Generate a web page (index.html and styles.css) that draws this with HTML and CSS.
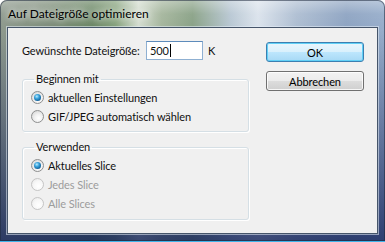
FILE: index.html
```html
<!DOCTYPE html>
<html lang="de">
<head>
  <meta charset="UTF-8" />
  <title>Auf Dateigröße optimieren</title>
  <link rel="stylesheet" href="styles.css">
</head>
<body>
  <div class="window">
    <div class="titlebar">Auf Dateigröße optimieren</div>
    <div class="client">
      <div class="main">
        <div class="size-row">
          <span class="size-label">Gewünschte Dateigröße:</span>
          <div class="textbox">500<span class="caret"></span></div>
          <span class="unit">K</span>
        </div>

        <fieldset class="group">
          <legend>Beginnen mit</legend>
          <div class="option"><span class="radio checked"></span>aktuellen Einstellungen</div>
          <div class="option"><span class="radio"></span>GIF/JPEG automatisch wählen</div>
        </fieldset>

        <fieldset class="group group-last">
          <legend>Verwenden</legend>
          <div class="option"><span class="radio checked"></span>Aktuelles Slice</div>
          <div class="option disabled"><span class="radio"></span>Jedes Slice</div>
          <div class="option disabled"><span class="radio"></span>Alle Slices</div>
        </fieldset>
      </div>

      <div class="actions">
        <button class="btn btn-default">OK</button>
        <button class="btn">Abbrechen</button>
      </div>
    </div>
  </div>
</body>
</html>
```

FILE: styles.css
```css
* {
  margin: 0;
  padding: 0;
  box-sizing: border-box;
}
body {
  font-family: Lato, 'Liberation Sans', sans-serif;
  font-size: 11px;
  letter-spacing: -0.1px;
  color: #111;
  background: #fff;
}
.window {
  width: 385px;
  height: 242px;
  display: flex;
  flex-direction: column;
  padding: 0 7px 7px 7px;
  border-radius: 7px 7px 0 0;
  border-bottom: 1px solid #3fb4ea;
  background:
    linear-gradient(180deg, rgba(255,255,255,0.35) 0, rgba(255,255,255,0.05) 14px, rgba(255,255,255,0) 27px),
    linear-gradient(180deg, rgba(0,0,0,0) 0, rgba(0,0,0,0) 30px, rgba(20,35,90,0.8) 100%),
    linear-gradient(90deg, #8f9a8e 0%, #7f8e7b 12%, #6b8765 24%, #86a27c 30%, #d4ddd0 36%, #a5b69d 42%, #8aa287 50%, #b9c8d4 60%, #dbe3ec 67%, #aebed2 77%, #8ea4c2 90%, #98aecb 100%);
  box-shadow: inset 0 0 0 1px rgba(30,40,60,0.55);
}
.titlebar {
  height: 27px;
  padding: 1px 0 0 1px;
  font-size: 12px;
  letter-spacing: 0;
  line-height: 26px;
  color: #000;
  text-shadow: 0 0 6px rgba(255,255,255,0.9), 0 0 10px rgba(255,255,255,0.7);
}
.client {
  flex: 1;
  display: flex;
  padding: 13px 13px 0 14px;
  background: #f0f0f0;
  border: 1px solid #46556a;
  box-shadow: 0 0 0 1px rgba(230,238,248,0.55);
}
.main {
  width: 227px;
  display: flex;
  flex-direction: column;
}
.size-row {
  display: flex;
  align-items: center;
  height: 19px;
  white-space: nowrap;
}
.size-label {
  width: 124px;
}
.textbox {
  width: 57px;
  height: 19px;
  padding-left: 3px;
  line-height: 17px;
  background: #fff;
  border: 1px solid #8fb0d2;
  border-top-color: #5d8bbb;
  display: flex;
  align-items: center;
}
.caret {
  display: inline-block;
  width: 1px;
  height: 13px;
  margin-left: 1px;
  background: #000;
}
.unit {
  margin-left: 5px;
}
.group {
  margin-top: 11px;
  padding: 1px 0 5px 8px;
  border: 1px solid #d5dfe5;
  border-radius: 3px;
  box-shadow: inset 1px 1px 0 #fff, 1px 1px 0 #fff;
}
.group + .group {
  margin-top: 7px;
}
.group-last {
  padding-bottom: 6px;
}
.group legend {
  margin-left: 3px;
  padding: 0 2px;
  line-height: 16px;
}
.option {
  height: 19px;
  display: flex;
  align-items: center;
  gap: 4px;
}
.option.disabled {
  color: #9c9c9c;
}
.radio {
  width: 13px;
  height: 13px;
  border-radius: 50%;
  border: 1px solid #8e8f8f;
  background: radial-gradient(circle at 60% 65%, #ffffff 0, #f1f1f1 40%, #cfcfcf 100%);
  display: flex;
  align-items: center;
  justify-content: center;
}
.radio.checked::after {
  content: "";
  width: 7px;
  height: 7px;
  border-radius: 50%;
  background: radial-gradient(circle at 40% 35%, #b9ecff 0, #3aa3dc 35%, #0e5d97 75%, #0b3d66 100%);
}
.disabled .radio {
  border-color: #c5c5c5;
  background: radial-gradient(circle at 60% 65%, #ffffff 0, #f7f7f7 50%, #e4e4e4 100%);
}
.actions {
  margin-left: auto;
  width: 98px;
  padding-top: 1px;
  display: flex;
  flex-direction: column;
  gap: 9px;
}
.btn {
  height: 20px;
  font: inherit;
  letter-spacing: inherit;
  color: #000;
  border: 1px solid #707070;
  border-radius: 3px;
  background: linear-gradient(180deg, #f2f2f2 0, #ebebeb 50%, #dddddd 50%, #cfcfcf 100%);
  box-shadow: inset 0 0 0 1px rgba(255,255,255,0.8);
}
.btn-default {
  border-color: #3c7fb1;
  background: linear-gradient(180deg, #eaf6fd 0, #d9f0fc 50%, #bee6fd 50%, #a7d9f5 100%);
  box-shadow: inset 0 0 0 1px #61d0f6;
}
```
